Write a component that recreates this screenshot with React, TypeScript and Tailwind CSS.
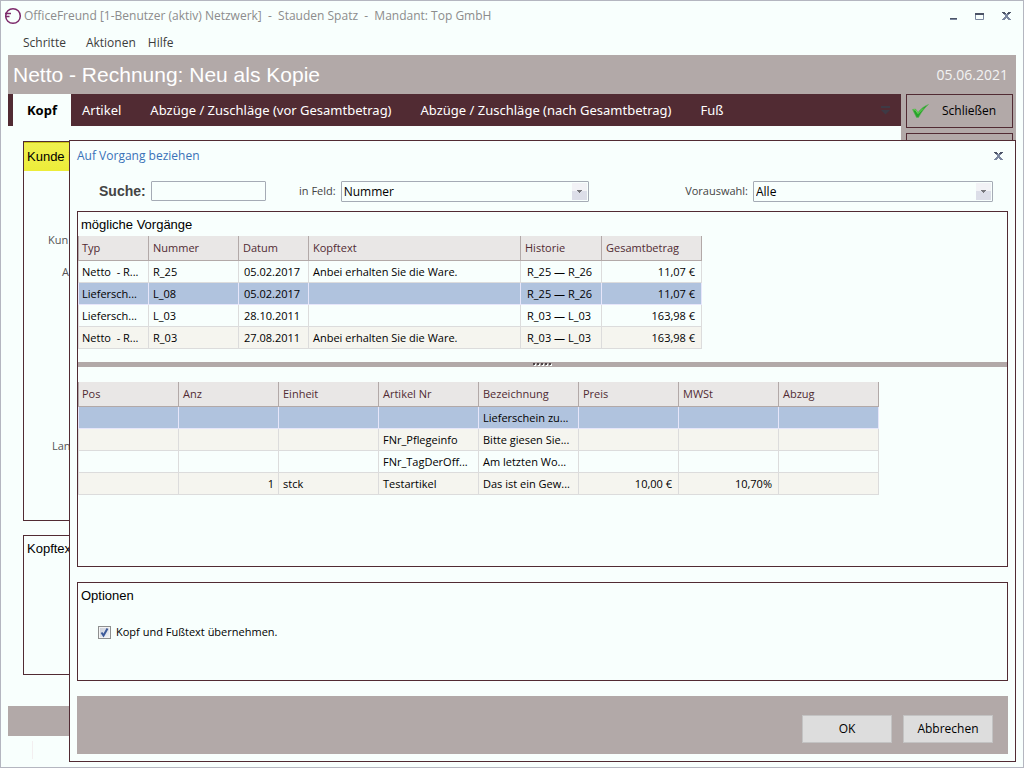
import { useState } from 'react';
import clsx from 'clsx';

const tabs = ['Artikel', 'Abzüge / Zuschläge (vor Gesamtbetrag)', 'Abzüge / Zuschläge (nach Gesamtbetrag)', 'Fuß'];

type Column = { label: string; width: string; align?: string };

const vorgangColumns: Column[] = [
  { label: 'Typ', width: 'w-[71px]' },
  { label: 'Nummer', width: 'w-[90px]' },
  { label: 'Datum', width: 'w-[70px]', align: 'pl-[5px]' },
  { label: 'Kopftext', width: 'w-[212px]' },
  { label: 'Historie', width: 'w-[81px]', align: 'pl-1.5' },
  { label: 'Gesamtbetrag', width: 'w-[100px]', align: 'text-right pr-1.5' },
];

const vorgangRows = [
  ['Netto  - R...', 'R_25', '05.02.2017', 'Anbei erhalten Sie die Ware.', 'R_25 — R_26', '11,07 €'],
  ['Liefersch...', 'L_08', '05.02.2017', '', 'R_25 — R_26', '11,07 €'],
  ['Liefersch...', 'L_03', '28.10.2011', '', 'R_03 — L_03', '163,98 €'],
  ['Netto  - R...', 'R_03', '27.08.2011', 'Anbei erhalten Sie die Ware.', 'R_03 — L_03', '163,98 €'],
];

const positionColumns: Column[] = [
  { label: 'Pos', width: 'w-[101px]' },
  { label: 'Anz', width: 'w-[100px]', align: 'text-right pr-1' },
  { label: 'Einheit', width: 'w-[100px]' },
  { label: 'Artikel Nr', width: 'w-[100px]' },
  { label: 'Bezeichnung', width: 'w-[100px]' },
  { label: 'Preis', width: 'w-[100px]', align: 'text-right pr-1.5' },
  { label: 'MWSt', width: 'w-[100px]', align: 'text-right pr-1.5' },
  { label: 'Abzug', width: 'w-[100px]' },
];

const positionRows = [
  ['', '', '', '', 'Lieferschein zu...', '', '', ''],
  ['', '', '', 'FNr_Pflegeinfo', 'Bitte giesen Sie...', '', '', ''],
  ['', '', '', 'FNr_TagDerOff...', 'Am letzten Wo...', '', '', ''],
  ['', '1', 'stck', 'Testartikel', 'Das ist ein Gew...', '10,00 €', '10,70%', ''],
];

function CloseIcon() {
  return (
    <svg width="9" height="8" viewBox="0 0 9 8">
      <path d="M0 0h3v1h1v1h1V1h1V0h3v1H8v1H7v1H6v2h1v1h1v1h1v1H6V7H5V6H4v1H3v1H0V7h1V6h1V5h1V3H2V2H1V1H0z" fill="#7b879f" />
      <path d="M0 0h3v1h1v1H1V1H0zM6 0h3v1H8v1H5V1h1z" fill="#4b5366" />
    </svg>
  );
}

function Grid({ columns, rows, selected, stripe }: { columns: Column[]; rows: string[][]; selected: number; stripe: number[] }) {
  const [active, setActive] = useState(selected);

  return (
    <table className="w-fit table-fixed border-separate border-spacing-0 text-left text-[11px] leading-4">
      <thead>
        <tr>
          {columns.map((c) => (
            <th
              key={c.label}
              className={clsx(
                c.width,
                'h-[25px] border-r border-b border-[#b2a9a8] bg-[#e9e7e6] py-0 pr-0 pl-1 font-normal whitespace-nowrap text-[#512b33] first:border-l first:pl-[3px]'
              )}
            >
              {c.label}
            </th>
          ))}
        </tr>
      </thead>
      <tbody>
        {rows.map((row, i) => (
          <tr
            key={i}
            onClick={() => setActive(i)}
            className={clsx(active === i ? 'bg-[#b0c3de]' : stripe.includes(i) && 'bg-[#f5f5ef]')}
          >
            {row.map((cell, j) => (
              <td
                key={j}
                className={clsx(
                  'h-[22px] overflow-hidden border-r border-b py-0 whitespace-pre text-black first:border-l first:pl-[3px]',
                  active === i ? 'border-[#e6e6fa]' : 'border-[#dcdcdc]',
                  columns[j].align ?? 'pl-1'
                )}
              >
                {cell}
              </td>
            ))}
          </tr>
        ))}
      </tbody>
    </table>
  );
}

function Combo({ id, value, options, width }: { id: string; value: string; options: string[]; width: string }) {
  return (
    <div className={clsx('relative', width)}>
      <select
        id={id}
        defaultValue={value}
        className="block h-[21px] w-full appearance-none rounded-[1px] border border-[#a5abb5] bg-[#f8fffd] pt-px pl-0.5 text-[12px] leading-4 text-black"
      >
        {options.map((o) => (
          <option key={o}>{o}</option>
        ))}
      </select>
      <span className="pointer-events-none absolute top-0.5 right-0.5 flex h-[17px] w-[15px] items-center justify-center bg-linear-to-b from-[#f2f2f6] from-45% to-[#dcdee8] to-45%">
        <svg width="5" height="3" viewBox="0 0 5 3">
          <path d="M0 0h5v1H4v1H3v1H2V2H1V1H0z" fill="#77777c" />
        </svg>
      </span>
    </div>
  );
}

function Dialog() {
  return (
    <div
      role="dialog"
      aria-label="Auf Vorgang beziehen"
      className="absolute top-[139px] right-[7px] bottom-[5px] left-[68px] flex flex-col border border-[#512b33] bg-[#f8fffd] px-[7px] pb-[7px]"
    >
      <div className="flex h-[30px] shrink-0 items-center justify-between pr-[5px]">
        <h2 className="text-[12px] leading-4 text-[#3a72b8]">Auf Vorgang beziehen</h2>
        <button type="button" aria-label="Dialog schließen">
          <CloseIcon />
        </button>
      </div>

      <div className="flex h-10 shrink-0 items-center pr-[15px] pl-[22px] text-[#444]">
        <label htmlFor="suche" className="w-[52px] font-['Liberation_Sans',sans-serif] text-[14px] leading-4 font-bold">
          Suche:
        </label>
        <input id="suche" type="text" className="h-5 w-[115px] rounded-[1px] border border-[#a5abb5] bg-[#f8fffd] px-1 text-[12px]" />
        <div className="ml-[33px] flex items-center gap-[5px]">
          <label htmlFor="feld" className="text-[11px] leading-4">in Feld:</label>
          <Combo id="feld" value="Nummer" options={['Nummer', 'Datum', 'Kopftext']} width="w-[248px]" />
        </div>
        <div className="ml-auto flex items-center gap-[5px]">
          <label htmlFor="vorauswahl" className="text-[11px] leading-4">Vorauswahl:</label>
          <Combo id="vorauswahl" value="Alle" options={['Alle', 'Rechnung', 'Lieferschein']} width="w-60" />
        </div>
      </div>

      <section className="flex flex-1 flex-col border border-[#512b33]">
        <h3 className="h-6 pt-[5px] pl-[3px] font-['Liberation_Sans',sans-serif] text-[13px] leading-4 text-black">mögliche Vorgänge</h3>
        <Grid columns={vorgangColumns} rows={vorgangRows} selected={1} stripe={[3]} />
        <div className="mt-[13px] mb-[15px] flex h-[5px] items-center justify-center bg-[#b2a9a8]">
          <svg width="19" height="3" viewBox="0 0 19 3">
            {[0, 4, 8, 12, 16].map((x) => (
              <g key={x}>
                <path d={`M${x + 1} 1h2v2h-2z`} fill="#f8fffd" />
                <path d={`M${x} 0h2v2h-2z`} fill="#4d4448" />
              </g>
            ))}
          </svg>
        </div>
        <Grid columns={positionColumns} rows={positionRows} selected={0} stripe={[1, 3]} />
      </section>

      <section className="mt-[15px] h-[99px] shrink-0 border border-[#512b33]">
        <h3 className="pt-[5px] pl-[3px] font-['Liberation_Sans',sans-serif] text-[13px] leading-4 text-black">Optionen</h3>
        <label className="mt-5 ml-5 flex w-fit items-center gap-[5px] text-[11px] leading-4 text-black">
          <span className="relative size-[13px]">
            <input
              type="checkbox"
              defaultChecked
              className="peer block size-[13px] appearance-none border border-[#8e8f8f] bg-linear-to-br from-[#c8ccd8] to-[#f4f6fa] shadow-[inset_0_0_0_1px_#f4f4f4]"
            />
            <svg className="pointer-events-none absolute inset-0 hidden peer-checked:block" width="13" height="13" viewBox="0 0 13 13">
              <path d="M3.5 6.5 5.5 9.5 9.5 2.5" fill="none" stroke="#3d5a9a" strokeWidth="2" />
            </svg>
          </span>
          Kopf und Fußtext übernehmen.
        </label>
      </section>

      <footer className="mt-[15px] flex h-[58px] shrink-0 items-center justify-end gap-[11px] bg-[#b2a9a8] pt-2 pr-[15px] text-[12px] leading-4 text-black">
        <button type="button" className="h-7 w-[90px] border border-[#c3c3c3] bg-[#dddddd]">OK</button>
        <button type="button" className="h-7 w-[90px] border border-[#c3c3c3] bg-[#dddddd]">Abbrechen</button>
      </footer>
    </div>
  );
}

export default function App() {
  return (
    <div className="relative flex min-h-screen flex-col border border-[#b4b6c0] bg-[#f8fffd] px-[7px] font-['Open_Sans','Noto_Sans',sans-serif]">
      <header className="flex h-[30px] items-center">
        <svg className="-ml-1" width="18" height="18" viewBox="0 0 18 18">
          <circle cx="9" cy="9" r="7.3" fill="none" stroke="#7d2a6b" strokeWidth="1.5" />
          <path d="M1 6.500h6M1 9.500h4.500" fill="none" stroke="#7d2a6b" strokeWidth="1.4" />
        </svg>
        <h1 className="ml-0.5 text-[12px] leading-4 whitespace-pre text-[#8c8c8c]">
          {'OfficeFreund [1-Benutzer (aktiv) Netzwerk]  -  Stauden Spatz  -  Mandant: Top GmbH'}
        </h1>
        <div className="ml-auto flex items-center gap-[18px] pr-[5px]">
          <button type="button" aria-label="Minimieren">
            <svg width="7" height="9" viewBox="0 0 7 9">
              <path d="M0 6h7v1H0z" fill="#4b5366" />
              <path d="M0 7h7v1H0z" fill="#7b879f" />
            </svg>
          </button>
          <button type="button" aria-label="Maximieren">
            <svg width="9" height="9" viewBox="0 0 9 9">
              <path d="M.5 1.5h8v6h-8z" fill="none" stroke="#7b879f" />
              <path d="M0 1h9v2H0z" fill="#4b5366" />
            </svg>
          </button>
          <button type="button" aria-label="Schließen">
            <CloseIcon />
          </button>
        </div>
      </header>

      <nav className="flex h-6 items-center gap-5 pl-[15px] text-[12px] leading-4 text-[#3c3c3c]">
        <button type="button">Schritte</button>
        <button type="button">Aktionen</button>
        <button type="button" className="-ml-2">Hilfe</button>
      </nav>

      <div className="flex h-[39px] items-center justify-between bg-[#b2a9a8] pr-2 pl-[5px] text-white">
        <h2 className="font-['Liberation_Sans',sans-serif] text-[21px] leading-6">Netto - Rechnung: Neu als Kopie</h2>
        <span className="text-[14px] leading-4 text-[#f3f3f3]">05.06.2021</span>
      </div>

      <div className="flex flex-1">
        <main className="flex flex-1 flex-col">
          <div role="tablist" className="flex h-8 items-stretch bg-[#512b33] pl-[5px] font-['Noto_Sans',sans-serif] text-[13px] leading-4 text-white">
            <button type="button" role="tab" aria-selected="true" className="w-[58px] bg-[#f8fffd] font-bold text-black">
              Kopf
            </button>
            {tabs.map((t) => (
              <button key={t} type="button" role="tab" aria-selected="false" className="pr-[18px] pl-[11px]">
                {t}
              </button>
            ))}
            <svg className="mr-[11px] ml-auto self-center" width="9" height="9" viewBox="0 0 9 9">
              <path d="M0 0h9v2H0zM0 4h9L4.500 8.500z" fill="#3d3a45" />
            </svg>
          </div>
          <section className="mt-[15px] mr-4 ml-[15px] flex-1 border border-[#512b33]">
            <h3 className="h-[29px] border-t border-[#c9c415] bg-linear-to-br from-[#f0f050] to-[#eaea10] pt-1.5 pl-[3px] font-['Liberation_Sans',sans-serif] text-[13px] leading-4 text-black">
              Kunde i
            </h3>
            <div className="pt-[61px] pl-6 text-[11px] leading-4 text-[#555]">
              <p>Kun</p>
              <p className="mt-4 pl-3.5">A</p>
              <p className="mt-[158px] pl-1">Lan</p>
            </div>
          </section>
          <section className="mt-[14px] mr-4 ml-[15px] h-[140px] border border-[#512b33]">
            <h3 className="pt-[5px] pl-[3px] font-['Liberation_Sans',sans-serif] text-[13px] leading-4 text-black">Kopftex</h3>
          </section>
          <div className="h-[31px]" />
        </main>

        <aside className="flex w-[115px] flex-col gap-[5px] bg-[#b2a9a8] pr-[3px] pl-[5px]">
          <button type="button" className="flex h-[34px] items-center border border-[#512b33] pl-[5px] text-[12px] leading-4 text-black">
            <svg width="17" height="14" viewBox="0 0 17 14">
              <path d="M.5 5.500 3.500 5 6 8.500C8.500 5 12 2 16.500.5 12 4.500 9.500 8 6.500 13.500H4.500z" fill="#27a32a" stroke="#5fae58" strokeWidth=".6" />
              <path d="M1.500 6 3.200 5.700 6 9.600 11 4.500" fill="none" stroke="#6fdc5c" strokeWidth="1" />
            </svg>
            <span className="ml-[13px]">Schließen</span>
          </button>
          <button type="button" aria-label="Speichern" className="h-[34px] border border-[#512b33]" />
        </aside>
      </div>

      <div className="h-[30px] bg-[#b2a9a8]" />
      <div className="mt-[5px] mb-2 ml-6 h-[18px] border-l border-[#f3eff0]" />

      <Dialog />
    </div>
  );
}
